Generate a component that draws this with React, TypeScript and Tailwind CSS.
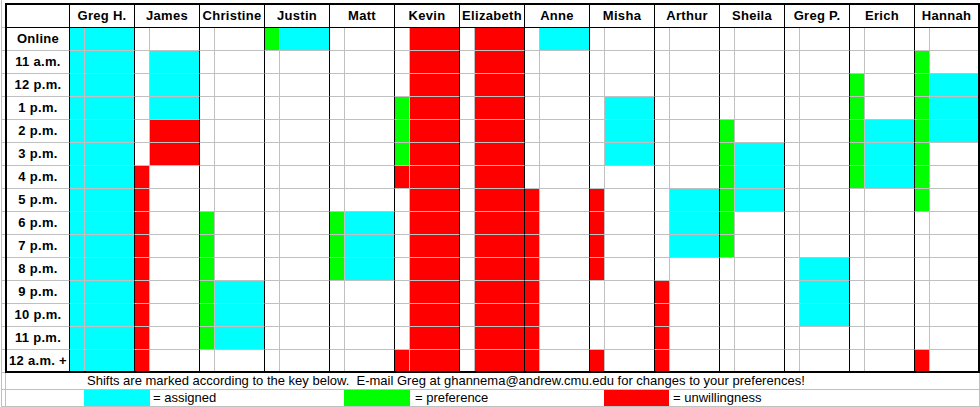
import React from "react";

type Mark = "c" | "g" | "r";
type Span = [Mark, number, number];

const ROWS = [
  "Online",
  "11 a.m.",
  "12 p.m.",
  "1 p.m.",
  "2 p.m.",
  "3 p.m.",
  "4 p.m.",
  "5 p.m.",
  "6 p.m.",
  "7 p.m.",
  "8 p.m.",
  "9 p.m.",
  "10 p.m.",
  "11 p.m.",
  "12 a.m. +",
];

// n = narrow (preference / unwillingness) column, w = wide (assigned) column
const PEOPLE: { name: string; n: Span[]; w: Span[] }[] = [
  { name: "Greg H.", n: [["c", 0, 14]], w: [["c", 0, 14]] },
  { name: "James", n: [["r", 6, 14]], w: [["c", 1, 3], ["r", 4, 5]] },
  { name: "Christine", n: [["g", 8, 13]], w: [["c", 11, 13]] },
  { name: "Justin", n: [["g", 0, 0]], w: [["c", 0, 0]] },
  { name: "Matt", n: [["g", 8, 10]], w: [["c", 8, 10]] },
  { name: "Kevin", n: [["g", 3, 5], ["r", 6, 6], ["r", 14, 14]], w: [["r", 0, 14]] },
  { name: "Elizabeth", n: [], w: [["r", 0, 14]] },
  { name: "Anne", n: [["r", 7, 14]], w: [["c", 0, 0]] },
  { name: "Misha", n: [["r", 7, 10], ["r", 14, 14]], w: [["c", 3, 5]] },
  { name: "Arthur", n: [["r", 11, 14]], w: [["c", 7, 9]] },
  { name: "Sheila", n: [["g", 4, 9]], w: [["c", 5, 7]] },
  { name: "Greg P.", n: [], w: [["c", 10, 12]] },
  { name: "Erich", n: [["g", 2, 6]], w: [["c", 4, 6]] },
  { name: "Hannah", n: [["g", 1, 7], ["r", 14, 14]], w: [["c", 2, 4]] },
];

const FILL: Record<Mark, string> = {
  c: "bg-[#00ffff]",
  g: "bg-[#00ff00]",
  r: "bg-[#ff0000]",
};

function markAt(spans: Span[], row: number): string {
  const s = spans.find(([, a, b]) => row >= a && row <= b);
  return s ? FILL[s[0]] : "bg-white";
}

export default function App() {
  const last = ROWS.length - 1;

  return (
    <div className="flex w-[980px] h-[407px] overflow-hidden bg-white font-['Liberation_Sans',Arial,sans-serif] text-black">
      {/* left strip of the next sheet column */}
      <div className="w-[5px] pl-[1px] shrink-0">
        <div className="flex flex-col border-l border-[#c0c0c0] h-full">
          <div className="h-[28px] border-b border-[#c0c0c0]" />
          {ROWS.map((r) => (
            <div key={r} className="h-[23px] border-b border-[#c0c0c0]" />
          ))}
          <div className="h-[17px] border-b border-[#c0c0c0]" />
          <div className="h-[17px] border-b border-[#c0c0c0]" />
        </div>
      </div>

      <div className="w-[975px] shrink-0 flex flex-col">
        <div className="h-[3px]" />

        {/* --- SCHEDULE GRID --- */}
        <div className="border-2 border-black grid grid-cols-[62px_repeat(13,15px_50px)_15px_49px]">
          <div className="h-[23px] border-b border-black" />
          {PEOPLE.map((p) => (
            <div
              key={p.name}
              className="col-span-2 h-[23px] border-l border-b border-black flex items-center justify-center text-[13px] font-bold tracking-[0.3px]"
            >
              {p.name}
            </div>
          ))}

          {ROWS.map((label, i) => {
            const h = i === last ? "h-[21px]" : "h-[23px] border-b";
            return (
              <React.Fragment key={label}>
                <div
                  className={`${h} border-[#c0c0c0] flex items-center justify-center text-[13px] font-bold tracking-[0.3px] whitespace-nowrap`}
                >
                  {label}
                </div>
                {PEOPLE.map((p) => (
                  <React.Fragment key={p.name}>
                    <div className={`${h} border-b-[#c0c0c0] border-l border-l-black ${markAt(p.n, i)}`} />
                    <div className={`${h} border-[#c0c0c0] border-l ${markAt(p.w, i)}`} />
                  </React.Fragment>
                ))}
              </React.Fragment>
            );
          })}
        </div>

        {/* --- FOOTER / KEY --- */}
        <div className="flex flex-col border-x border-[#c0c0c0] text-[13px]">
          <div className="h-[17px] border-b border-[#c0c0c0] pl-[81px] leading-[16px] whitespace-pre">
            {"Shifts are marked according to the key below.  E-mail Greg at ghannema@andrew.cmu.edu for changes to your preferences!"}
          </div>
          <div className="h-[17px] border-b border-[#c0c0c0] flex pl-[78px] leading-[16px]">
            <div className="w-[260px] flex">
              <div className="w-[66px] h-full bg-[#00ffff]" />
              <span className="pl-[3px]">= assigned</span>
            </div>
            <div className="w-[260px] flex">
              <div className="w-[66px] h-full bg-[#00ff00]" />
              <span className="pl-[5px]">= preference</span>
            </div>
            <div className="flex">
              <div className="w-[65px] h-full bg-[#ff0000]" />
              <span className="pl-[4px]">= unwillingness</span>
            </div>
          </div>
        </div>
      </div>
    </div>
  );
}
